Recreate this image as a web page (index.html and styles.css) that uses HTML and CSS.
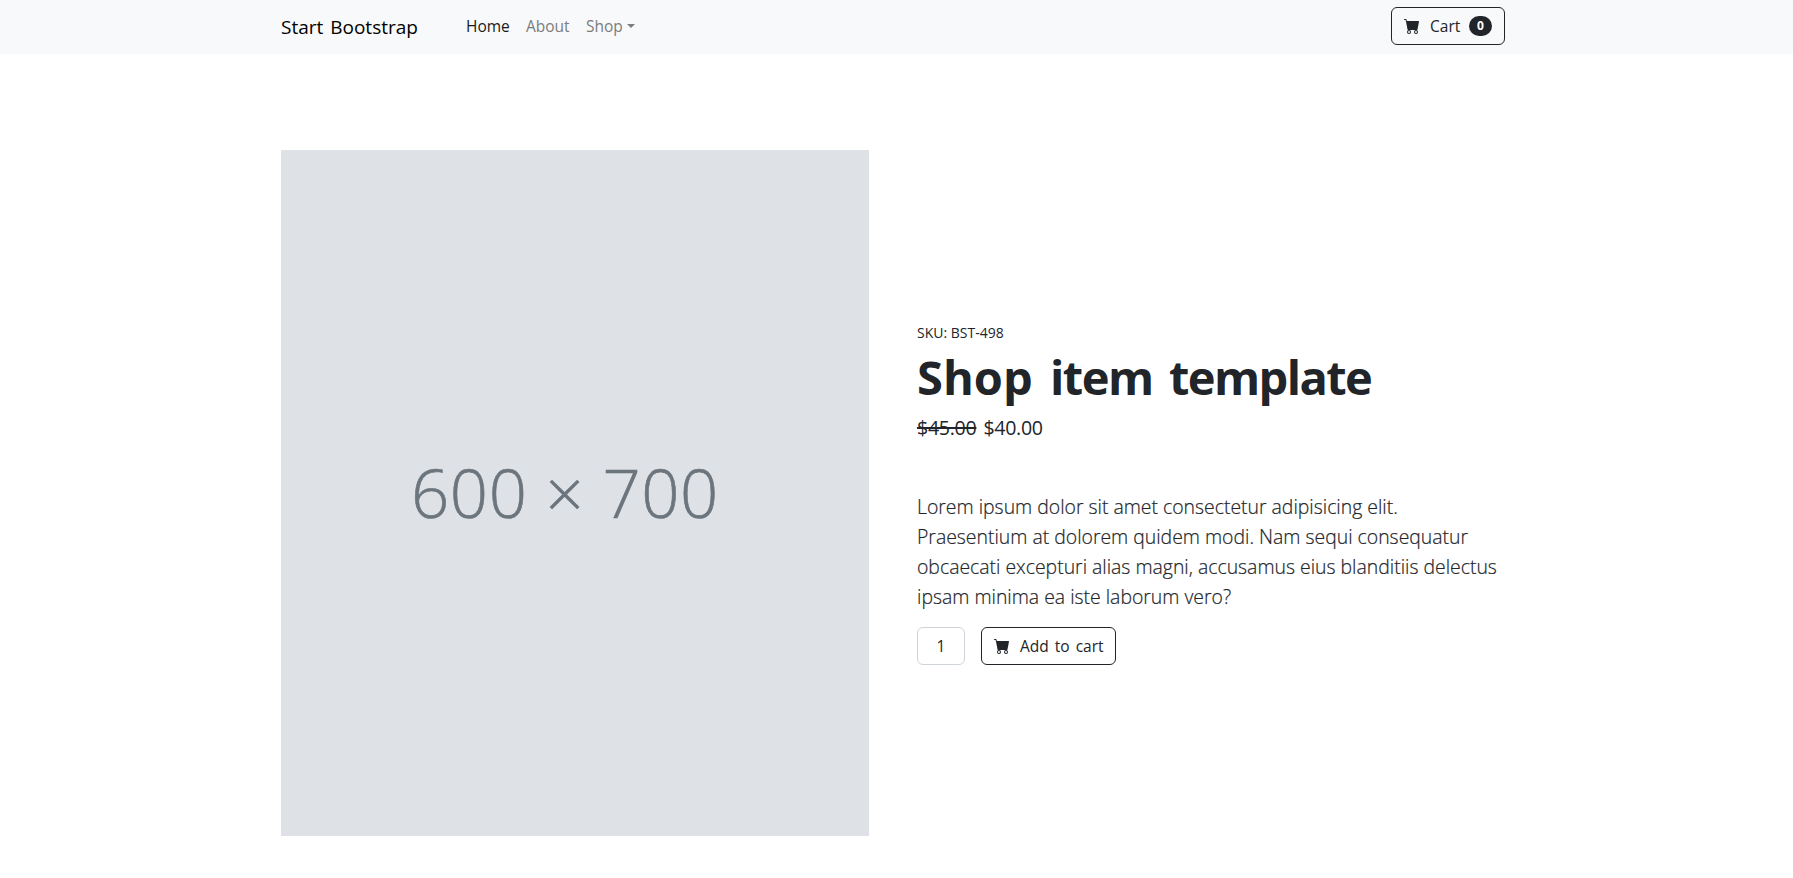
FILE: index.html
```html
<!DOCTYPE html>
<html lang="en">
<head>
<meta charset="utf-8">
<title>Shop Item</title>
<link rel="stylesheet" href="styles.css">
</head>
<body>
<nav class="navbar">
  <div class="container navbar-inner">
    <a class="brand"><span>Start Bootstrap</span></a>
    <ul class="nav">
      <li class="nav-home active">Home</li>
      <li class="nav-about">About</li>
      <li class="nav-shop">Shop</li>
    </ul>
    <button class="btn btn-nav">
      <svg class="icon" viewBox="0 0 16 16"><path d="M0 1.5A.5.5 0 0 1 .5 1H2a.5.5 0 0 1 .485.379L2.89 3H14.5a.5.5 0 0 1 .491.592l-1.5 8A.5.5 0 0 1 13 12H4a.5.5 0 0 1-.491-.408L2.01 3.607 1.61 2H.5a.5.5 0 0 1-.5-.5zM5 12a2 2 0 1 0 0 4 2 2 0 0 0 0-4zm7 0a2 2 0 1 0 0 4 2 2 0 0 0 0-4zm-7 1a1 1 0 1 1 0 2 1 1 0 0 1 0-2zm7 0a1 1 0 1 1 0 2 1 1 0 0 1 0-2z"/></svg>
      <span class="btn-text">Cart</span>
      <span class="badge">0</span>
    </button>
  </div>
</nav>
<main class="container product">
  <div class="picture"><span>600 × 700</span></div>
  <div class="details">
    <div class="sku"><span>SKU: BST-498</span></div>
    <h1 class="title"><span class="w1">Shop </span><span class="w2">item </span><span class="w3">template</span></h1>
    <div class="price"><span class="old">$45.00</span><span class="new">$40.00</span></div>
    <p class="lead">Lorem ipsum dolor sit amet consectetur adipisicing elit.<br>Praesentium at dolorem quidem modi. Nam sequi consequatur<br>obcaecati excepturi alias magni, accusamus eius blanditiis delectus<br>ipsam minima ea iste laborum vero?</p>
    <div class="actions">
      <input class="qty" value="1">
      <button class="btn btn-add">
        <svg class="icon" viewBox="0 0 16 16"><path d="M0 1.5A.5.5 0 0 1 .5 1H2a.5.5 0 0 1 .485.379L2.89 3H14.5a.5.5 0 0 1 .491.592l-1.5 8A.5.5 0 0 1 13 12H4a.5.5 0 0 1-.491-.408L2.01 3.607 1.61 2H.5a.5.5 0 0 1-.5-.5zM5 12a2 2 0 1 0 0 4 2 2 0 0 0 0-4zm7 0a2 2 0 1 0 0 4 2 2 0 0 0 0-4zm-7 1a1 1 0 1 1 0 2 1 1 0 0 1 0-2zm7 0a1 1 0 1 1 0 2 1 1 0 0 1 0-2z"/></svg>
        <span class="btn-text">Add to cart</span>
      </button>
    </div>
  </div>
</main>
</body>
</html>
```
FILE: styles.css
```css
* { box-sizing: border-box; }
body {
  margin: 0;
  background: #fff;
  color: #212529;
  font-family: "Open Sans", "Noto Sans", sans-serif;
  font-size: 16px;
  line-height: 24px;
  overflow: hidden;
}
.container { width: 1320px; margin-left: 233px; padding: 0 48px; }
.navbar { background: #f8f9fa; height: 54px; }
.navbar-inner { display: flex; align-items: center; height: 52px; }
.brand { width: 185px; padding-top: 1px; font-size: 19px; word-spacing: 2px; color: #000; white-space: nowrap; }
.nav { display: flex; list-style: none; margin: 0; padding: 0; font-size: 15.5px; color: #7b7c7d; flex: 1; }
.nav li { white-space: nowrap; }
.nav-home { width: 60px; }
.nav-about { width: 60px; }
.nav .active { color: #191919; }
.nav-shop { display: flex; align-items: center; gap: 4px; }
.nav-shop::after { content: ""; border: 4.5px solid transparent; border-top-color: currentColor; border-bottom: 0; }
.btn {
  display: flex;
  align-items: center;
  height: 38px;
  padding: 0 12px;
  border: 1px solid #212529;
  border-radius: 6px;
  background: transparent;
  color: #212529;
  font: 15.5px/24px "Open Sans", "Noto Sans", sans-serif;
  white-space: nowrap;
}
.btn-nav { width: 114px; }
.btn-add { width: 135px; word-spacing: 2px; }
.icon { width: 16px; height: 16px; fill: currentColor; flex: none; margin-right: 10px; }
.badge {
  margin-left: auto;
  width: 23px;
  height: 20px;
  border-radius: 10px;
  background: #212529;
  color: #fff;
  font-size: 12px;
  font-weight: 700;
  line-height: 20px;
  text-align: center;
}
.product { display: grid; grid-template-columns: 588px 588px; column-gap: 48px; align-items: center; padding-top: 96px; }
.picture {
  height: 686px;
  background: #dee2e6;
  display: flex;
  align-items: center;
  justify-content: center;
  padding: 0 20px 2px 0;
  font-size: 67px;
  font-weight: 300;
  letter-spacing: 0.6px;
  color: #6c757d;
  -webkit-text-stroke: 0.6px #6c757d;
  white-space: nowrap;
}
.details { padding-top: 1px; }
.sku { font-size: 14px; line-height: 21px; margin-bottom: 6px; }
.title { display: flex; margin: 0 0 6px; font-size: 47px; line-height: 57.6px; font-weight: 700; white-space: nowrap; }
.w1 { width: 133px; }
.w2 { width: 119px; letter-spacing: -1.5px; }
.w3 { letter-spacing: -1.6px; }
.price { font-size: 19.6px; letter-spacing: -0.3px; line-height: 30px; margin-bottom: 49px; display: flex; gap: 7px; }
.old { text-decoration: line-through; text-decoration-thickness: 2px; }
.lead { margin: 0 0 15px; font-size: 19.4px; line-height: 30px; font-weight: 300; -webkit-text-stroke: 0.2px #212529; white-space: nowrap; }
.actions { display: flex; gap: 16px; }
.qty {
  width: 48px;
  height: 38px;
  padding: 0;
  border: 1px solid #ced4da;
  border-radius: 6px;
  color: #212529;
  font: 15.5px/24px "Open Sans", "Noto Sans", sans-serif;
  text-align: center;
}
```
